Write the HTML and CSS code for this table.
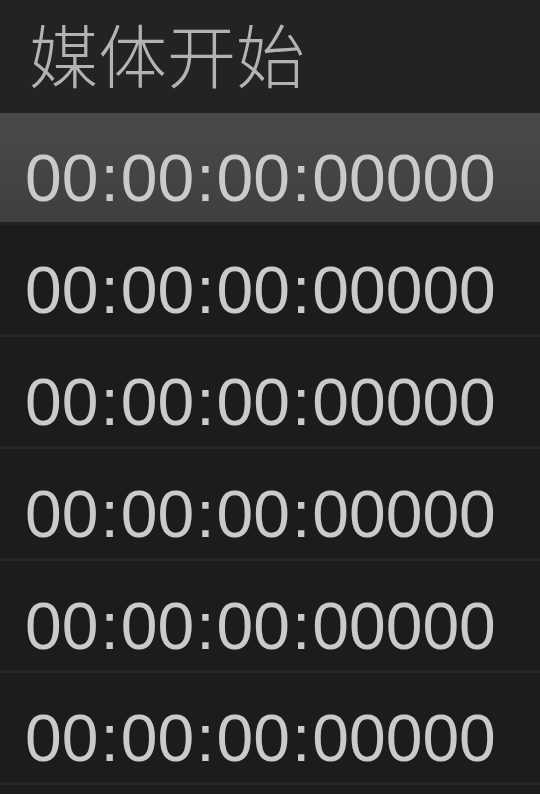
FILE: index.html
```html
<!DOCTYPE html>
<html lang="zh-CN">
<head>
    <meta charset="UTF-8">
    <meta name="viewport" content="width=device-width, initial-scale=1.0">
    <title>媒体开始</title>
    <link rel="stylesheet" href="styles.css">
</head>
<body>
    <div class="panel">
        <div class="header">媒体开始</div>
        <div class="rows">
            <div class="row selected">00<span class="sep">:</span>00<span class="sep">:</span>00<span class="sep">:</span>00000</div>
            <div class="row">00<span class="sep">:</span>00<span class="sep">:</span>00<span class="sep">:</span>00000</div>
            <div class="row">00<span class="sep">:</span>00<span class="sep">:</span>00<span class="sep">:</span>00000</div>
            <div class="row">00<span class="sep">:</span>00<span class="sep">:</span>00<span class="sep">:</span>00000</div>
            <div class="row">00<span class="sep">:</span>00<span class="sep">:</span>00<span class="sep">:</span>00000</div>
            <div class="row">00<span class="sep">:</span>00<span class="sep">:</span>00<span class="sep">:</span>00000</div>
        </div>
    </div>
</body>
</html>
```

FILE: styles.css
```css
body {
    margin: 0;
    padding: 0;
    background-color: #1c1c1c;
    overflow: hidden;
}

.panel {
    width: 540px;
    height: 794px;
    overflow: hidden;
}

.header {
    height: 106px;
    padding: 0 0 7px 29px;
    line-height: 106px;
    background-color: #232323;
    color: #b3b3b3;
    font-family: "Noto Sans CJK SC", "Noto Sans", sans-serif;
    font-size: 69px;
    font-weight: 300;
    white-space: nowrap;
}

.row {
    height: 87px;
    padding: 22px 0 0 25px;
    line-height: 87px;
    border-bottom: 3px solid #272727;
    background-color: #1c1c1c;
    color: #cacaca;
    font-family: "Liberation Sans", Arial, sans-serif;
    font-size: 66px;
    white-space: nowrap;
}

.row.selected {
    background: linear-gradient(#4a4a4a, #3f3f3f);
    border-bottom-color: #232323;
}

.sep {
    margin: 0 2px;
}
```
